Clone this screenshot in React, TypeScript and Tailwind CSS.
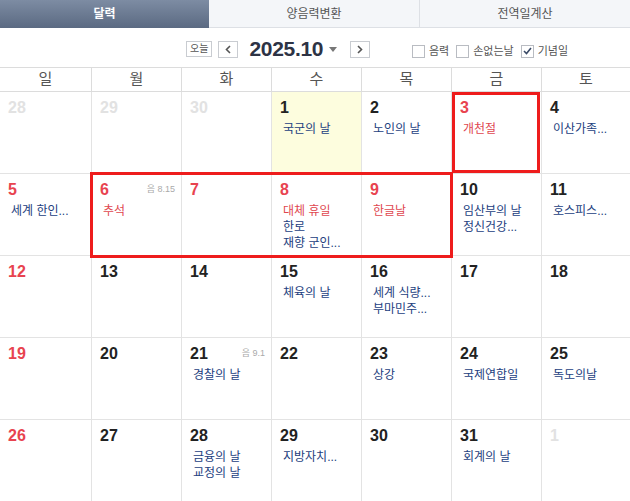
import React from "react";

type Ev = { t: string; red?: boolean };
type Day = { d: number; muted?: boolean; red?: boolean; today?: boolean; lunar?: string; ev?: Ev[] };

const font = { fontFamily: '"Liberation Sans", "Noto Sans CJK KR", sans-serif' };

const weeks: Day[][] = [
  [
    { d: 28, muted: true },
    { d: 29, muted: true },
    { d: 30, muted: true },
    { d: 1, today: true, ev: [{ t: "국군의 날" }] },
    { d: 2, ev: [{ t: "노인의 날" }] },
    { d: 3, red: true, ev: [{ t: "개천절", red: true }] },
    { d: 4, ev: [{ t: "이산가족..." }] },
  ],
  [
    { d: 5, red: true, ev: [{ t: "세계 한인..." }] },
    { d: 6, red: true, lunar: "8.15", ev: [{ t: "추석", red: true }] },
    { d: 7, red: true },
    { d: 8, red: true, ev: [{ t: "대체 휴일", red: true }, { t: "한로" }, { t: "재향 군인..." }] },
    { d: 9, red: true, ev: [{ t: "한글날", red: true }] },
    { d: 10, ev: [{ t: "임산부의 날" }, { t: "정신건강..." }] },
    { d: 11, ev: [{ t: "호스피스..." }] },
  ],
  [
    { d: 12, red: true },
    { d: 13 },
    { d: 14 },
    { d: 15, ev: [{ t: "체육의 날" }] },
    { d: 16, ev: [{ t: "세계 식량..." }, { t: "부마민주..." }] },
    { d: 17 },
    { d: 18 },
  ],
  [
    { d: 19, red: true },
    { d: 20 },
    { d: 21, lunar: "9.1", ev: [{ t: "경찰의 날" }] },
    { d: 22 },
    { d: 23, ev: [{ t: "상강" }] },
    { d: 24, ev: [{ t: "국제연합일" }] },
    { d: 25, ev: [{ t: "독도의날" }] },
  ],
  [
    { d: 26, red: true },
    { d: 27 },
    { d: 28, ev: [{ t: "금융의 날" }, { t: "교정의 날" }] },
    { d: 29, ev: [{ t: "지방자치..." }] },
    { d: 30 },
    { d: 31, ev: [{ t: "회계의 날" }] },
    { d: 1, muted: true },
  ],
];

const heads = ["일", "월", "화", "수", "목", "금", "토"];

function Check({ on }: { on?: boolean }) {
  return (
    <span className="w-[13px] h-[13px] border border-[#b9bcc2] bg-white flex items-center justify-center">
      {on && (
        <svg width="9" height="8" viewBox="0 0 9 8">
          <path d="M1 4 L3.5 6.5 L8 1" stroke="#3a4a66" strokeWidth="1.6" fill="none" />
        </svg>
      )}
    </span>
  );
}

export default function App() {
  return (
    <div className="w-[630px] h-[501px] bg-white overflow-hidden" style={font}>
      <div className="flex h-[28px] text-[12px]">
        <div className="w-[209px] flex items-center justify-center bg-gradient-to-b from-[#7d8ca3] to-[#5b6a82] text-white font-bold">달력</div>
        <div className="w-[210px] flex items-center justify-center bg-[#f4f6f9] text-[#555] border-b border-[#dde0e5]">양음력변환</div>
        <div className="flex-1 flex items-center justify-center bg-[#f4f6f9] text-[#555] border-l border-b border-[#dde0e5]">전역일계산</div>
      </div>
      <div className="h-[40px] border-b border-[#dcdcdc] relative">
        <div className="absolute left-[186px] top-[6px] h-[30px] flex items-center">
          <span className="h-[16px] px-[3px] border border-[#c9ccd1] text-[10px] text-[#555] leading-[14px]">오늘</span>
          <span className="ml-[6px] w-[20px] h-[17px] border border-[#c9ccd1] flex items-center justify-center">
            <svg width="6" height="9" viewBox="0 0 6 9"><path d="M5 1 L1.5 4.5 L5 8" stroke="#555" strokeWidth="1.6" fill="none" /></svg>
          </span>
          <span className="ml-[11px] text-[21px] font-bold text-[#2d3345] tracking-[-0.3px] leading-[30px]">2025.10</span>
          <svg className="ml-[6px]" width="8" height="5" viewBox="0 0 8 5"><path d="M0 0 H8 L4 5 Z" fill="#777" /></svg>
          <span className="ml-[13px] w-[20px] h-[17px] border border-[#c9ccd1] flex items-center justify-center">
            <svg width="6" height="9" viewBox="0 0 6 9"><path d="M1 1 L4.5 4.5 L1 8" stroke="#555" strokeWidth="1.6" fill="none" /></svg>
          </span>
        </div>
        <div className="absolute left-[412px] top-[15px] flex items-center text-[11px] text-[#555]">
          <Check />
          <span className="ml-[4px]">음력</span>
          <span className="ml-[7px]"><Check /></span>
          <span className="ml-[4px]">손없는날</span>
          <span className="ml-[7px]"><Check on /></span>
          <span className="ml-[4px]">기념일</span>
        </div>
      </div>
      <div className="relative">
        <div className="grid grid-cols-[91px_90px_90px_90px_90px_90px_89px]">
          {heads.map((h, i) => (
            <div key={h} className={`h-[24px] flex items-center justify-center text-[15px] text-[#555] border-b border-[#dcdcdc] ${i > 0 ? "border-l" : ""}`}>
              {h}
            </div>
          ))}
          {weeks.flat().map((c, i) => (
            <div
              key={i}
              className={`h-[82px] relative px-[8px] pt-[6px] border-b border-[#e3e3e3] ${i % 7 > 0 ? "border-l" : ""} ${c.today ? "bg-[#fdfdde]" : ""}`}
            >
              <div className={`text-[16px] font-bold leading-[20px] ${c.muted ? "text-[#e2e2e2]" : c.red ? "text-[#e8434f]" : "text-[#222]"}`}>{c.d}</div>
              {c.lunar && (
                <span className="absolute right-[6px] top-[9px] text-[9px] text-[#aaa]">음 {c.lunar}</span>
              )}
              <div className="mt-[3px] pl-[3px] text-[12px] leading-[16px]">
                {c.ev?.map((e, j) => (
                  <div key={j} className={`whitespace-nowrap ${e.red ? "text-[#e0474f]" : "text-[#23407e]"}`}>
                    {e.t}
                  </div>
                ))}
              </div>
            </div>
          ))}
        </div>
        <div className="absolute left-[452px] top-[24px] w-[88px] h-[81px] border-[3px] border-[#ee1c1c]" />
        <div className="absolute left-[90px] top-[104px] w-[363px] h-[86px] border-[3px] border-[#ee1c1c]" />
      </div>
    </div>
  );
}
